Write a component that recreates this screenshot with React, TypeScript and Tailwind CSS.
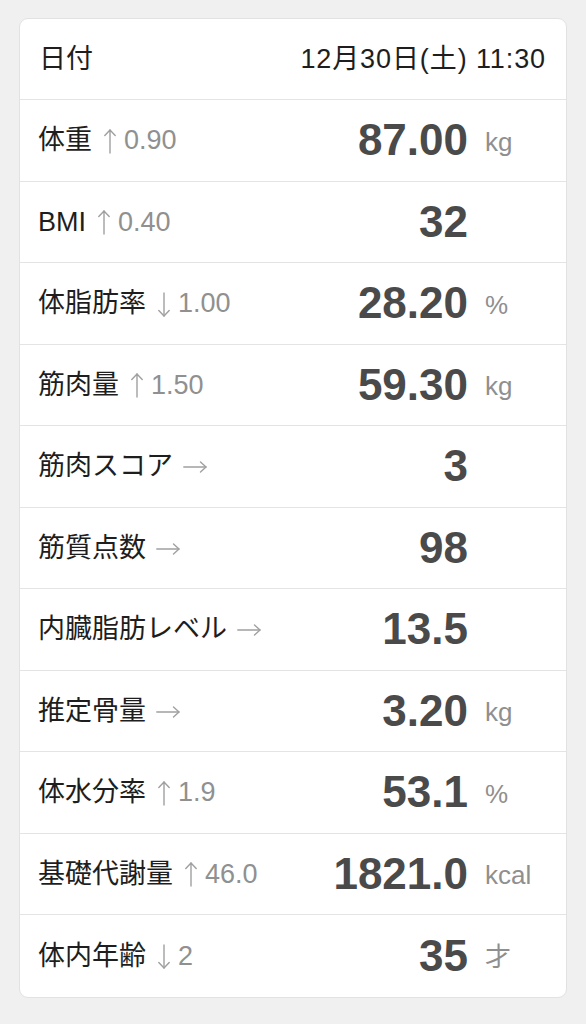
import React from "react";

type Dir = "up" | "down" | "right";
type Row = { label: string; arrow: Dir; delta?: string; value: string; unit?: string };

const rows: Row[] = [
  { label: "体重", arrow: "up", delta: "0.90", value: "87.00", unit: "kg" },
  { label: "BMI", arrow: "up", delta: "0.40", value: "32" },
  { label: "体脂肪率", arrow: "down", delta: "1.00", value: "28.20", unit: "%" },
  { label: "筋肉量", arrow: "up", delta: "1.50", value: "59.30", unit: "kg" },
  { label: "筋肉スコア", arrow: "right", value: "3" },
  { label: "筋質点数", arrow: "right", value: "98" },
  { label: "内臓脂肪レベル", arrow: "right", value: "13.5" },
  { label: "推定骨量", arrow: "right", value: "3.20", unit: "kg" },
  { label: "体水分率", arrow: "up", delta: "1.9", value: "53.1", unit: "%" },
  { label: "基礎代謝量", arrow: "up", delta: "46.0", value: "1821.0", unit: "kcal" },
  { label: "体内年齢", arrow: "down", delta: "2", value: "35", unit: "才" },
];

const font = { fontFamily: '"Liberation Sans", "Noto Sans CJK JP", sans-serif' };

function Arrow({ dir }: { dir: Dir }) {
  if (dir === "right") {
    return (
      <svg width="24" height="12" viewBox="0 0 24 12" className="ml-[10px] mt-[2px]" fill="none" stroke="#a0a0a0" strokeWidth="1.4" strokeLinecap="round" strokeLinejoin="round">
        <path d="M0.8 6H23" />
        <path d="M17.5 1L23 6L17.5 11" />
      </svg>
    );
  }
  return (
    <svg width="12" height="25" viewBox="0 0 12 25" className="ml-[12px] mt-[2px]" fill="none" stroke="#a0a0a0" strokeWidth="1.4" strokeLinecap="round" strokeLinejoin="round" style={dir === "down" ? { transform: "rotate(180deg)" } : undefined}>
      <path d="M6 1V24" />
      <path d="M0.8 6.5L6 1L11.2 6.5" />
    </svg>
  );
}

export default function App() {
  return (
    <div className="min-h-[1024px] w-[586px] bg-[#f0f0f0] pt-[18px]" style={font}>
      <div className="mx-[19px] w-[548px] overflow-hidden rounded-[9px] border border-[#e2e2e2] bg-white">
        <div className="flex h-[81px] items-center justify-between border-b border-[#e4e4e4] pl-[19px] pr-[20px] text-[27px] text-[#1e1e1e]">
          <span>日付</span>
          <span className="tracking-[0.9px]">12月30日(土) 11:30</span>
        </div>
        {rows.map((r, i) => (
          <div
            key={r.label}
            className={`flex h-[81.5px] items-center pl-[18px] pr-[18px] ${i < rows.length - 1 ? "border-b border-[#e4e4e4]" : ""}`}
          >
            <div className="flex flex-1 items-center text-[27px] text-[#1e1e1e]">
              <span>{r.label}</span>
              <Arrow dir={r.arrow} />
              {r.delta && <span className="ml-[8px] text-[#909090]">{r.delta}</span>}
            </div>
            <div className="text-right text-[44px] font-bold leading-none text-[#4a4a4a]">{r.value}</div>
            <div className="w-[80px] pl-[17px] pt-[4px] text-[26px] text-[#8f8f8f]">{r.unit ?? ""}</div>
          </div>
        ))}
      </div>
    </div>
  );
}
